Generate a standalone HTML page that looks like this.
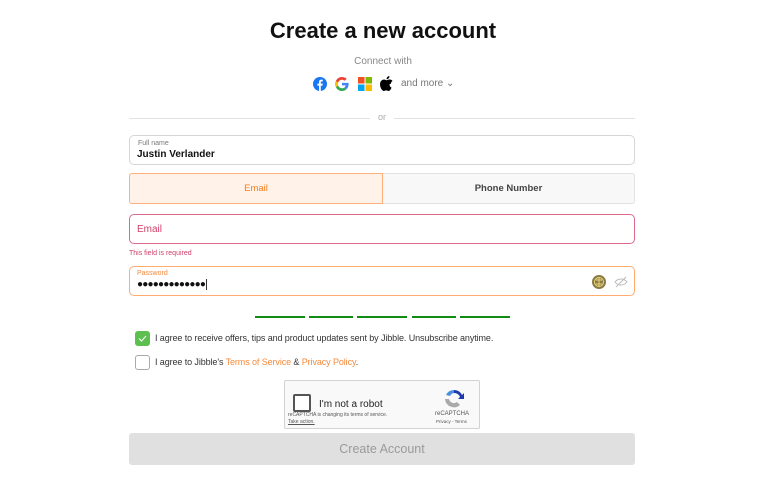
<!DOCTYPE html>
<html><head><style>
*{box-sizing:border-box;margin:0;padding:0}
body{width:758px;height:488px;background:#fff;font-family:"Liberation Sans",sans-serif;position:relative;overflow:hidden;color:#222}
.a{position:absolute}
.box{position:absolute;left:129px;width:506px;height:30px;border-radius:5px;background:#fff}
</style></head><body>
<div class="a" style="left:4px;width:758px;top:18px;text-align:center;font-size:22px;font-weight:bold;color:#111">Create a new account</div>
<div class="a" style="left:4px;width:758px;top:56px;text-align:center;font-size:10px;color:#888">Connect with</div>
<svg class="a" style="left:313px;top:77px" width="14" height="14" viewBox="0 0 14 14"><circle cx="7" cy="7" r="7" fill="#1877f2"/><path d="M7.8 14V8.6h1.7l.3-2H7.8V5.4c0-.6.2-1 1-1h1V2.7c-.3 0-.8-.1-1.4-.1-1.5 0-2.4.9-2.4 2.5v1.5H4.4v2h1.6V14z" fill="#fff"/></svg>
<svg class="a" style="left:335px;top:77px" width="14" height="14" viewBox="0 0 14 14"><path d="M13.6 7.2c0-.5 0-.9-.1-1.3H7v2.5h3.7c-.2.9-.7 1.6-1.4 2.1l2.2 1.7c1.3-1.2 2.1-3 2.1-5z" fill="#4285f4"/><path d="M7 14c1.9 0 3.4-.6 4.5-1.7L9.3 10.6c-.6.4-1.4.7-2.3.7-1.8 0-3.300-1.200-3.900-2.900L.9 10.100C2 12.400 4.300 14 7 14z" fill="#34a853"/><path d="M3.1 8.4C2.9 7.9 2.8 7.5 2.8 7s.1-.9.3-1.4L.9 3.9C.3 4.8 0 5.9 0 7s.3 2.2.9 3.1z" fill="#fbbc05"/><path d="M7 2.8c1 0 1.9.4 2.7 1l2-2C10.4.7 8.8 0 7 0 4.3 0 2 1.6.9 3.9l2.2 1.7C3.7 4 5.2 2.8 7 2.8z" fill="#ea4335"/></svg>
<svg class="a" style="left:358px;top:77px" width="14" height="14"><rect width="6.5" height="6.5" fill="#f25022"/><rect x="7.5" width="6.5" height="6.5" fill="#7fba00"/><rect y="7.5" width="6.5" height="6.5" fill="#00a4ef"/><rect x="7.5" y="7.5" width="6.5" height="6.5" fill="#ffb900"/></svg>
<svg class="a" style="left:380px;top:76px" width="13" height="15" viewBox="0 0 13 15"><path d="M10.8 8c0-2 1.6-2.9 1.7-3-.9-1.4-2.4-1.5-2.9-1.5-1.2-.1-2.4.7-3 .7s-1.6-.7-2.6-.7C2.600 3.500 0 4.800 0 8.300c0 1.100.2 2.200.6 3.200.5 1.400 1.900 3.500 3.200 3.500.8 0 1.300-.6 2.400-.6s1.500.6 2.400.6c1.400 0 2.500-2.200 2.900-3.400-2-.9-1.900-2.800-1.900-3.600zM8.700 2.300C9.400 1.500 9.400.7 9.400 0c-.8.100-1.600.5-2.100 1.100-.5.600-.8 1.300-.7 2.100.8.100 1.500-.3 2.100-.9z" fill="#000"/></svg>
<div class="a" style="left:401px;top:78px;font-size:10px;color:#777">and more ⌄</div>
<div class="a" style="left:129px;top:118px;width:241px;border-top:1px solid #e2e2e2"></div>
<div class="a" style="left:394px;top:118px;width:241px;border-top:1px solid #e2e2e2"></div>
<div class="a" style="left:378px;top:112px;font-size:9px;color:#aaa">or</div>
<div class="box" style="top:135px;border:1px solid #d6d6d6"><div class="a" style="left:8px;top:4px;font-size:7px;color:#777">Full name</div><div class="a" style="left:7px;top:13px;font-size:10px;font-weight:bold;color:#111">Justin Verlander</div></div>
<div class="a" style="left:129px;top:173px;width:254px;height:31px;background:#fff2e8;border:1px solid #ffb07a;border-radius:3px 0 0 3px;text-align:center;line-height:29px;font-size:9.5px;color:#f57c1f">Email</div>
<div class="a" style="left:383px;top:173px;width:252px;height:31px;background:#f8f8f8;border:1px solid #e2e2e2;border-left:none;border-radius:0 3px 3px 0;text-align:center;line-height:29px;font-size:9.5px;font-weight:bold;color:#444">Phone Number</div>
<div class="box" style="top:214px;border:1.5px solid #dc6a8a"><div class="a" style="left:7px;top:9px;font-size:10px;color:#d0406a">Email</div></div>
<div class="a" style="left:129px;top:250px;font-size:7px;color:#d0406a">This field is required</div>
<div class="box" style="top:266px;border:1.5px solid #ffac6e"><div class="a" style="left:7px;top:3px;font-size:7px;color:#f5893a">Password</div><div class="a" style="left:7px;top:12px;font-size:10px;color:#111;letter-spacing:-0.8px">●●●●●●●●●●●●●<span style="border-left:1px solid #333;margin-left:1px"></span></div>
<svg class="a" style="left:462px;top:8px" width="14" height="14"><circle cx="7" cy="7" r="7" fill="#8a7a48"/><circle cx="7" cy="7" r="4.5" fill="none" stroke="#e8d878" stroke-width="1"/><path d="M7 2.5v9M4 5h6M4 9h6" stroke="#e8d878" stroke-width="1"/></svg>
<svg class="a" style="left:484px;top:9px" width="14" height="12"><path d="M1 6c3-4 9-4 12 0-3 4-9 4-12 0z" fill="none" stroke="#bbb" stroke-width="1"/><path d="M2 11L12 1" stroke="#bbb" stroke-width="1"/></svg></div>
<div class="a" style="left:255px;top:316px;width:50px;height:2px;background:#138a13"></div>
<div class="a" style="left:309px;top:316px;width:44px;height:2px;background:#138a13"></div>
<div class="a" style="left:357px;top:316px;width:50px;height:2px;background:#138a13"></div>
<div class="a" style="left:412px;top:316px;width:44px;height:2px;background:#138a13"></div>
<div class="a" style="left:460px;top:316px;width:50px;height:2px;background:#138a13"></div>
<div class="a" style="left:135px;top:331px;width:15px;height:15px;background:#5cbf50;border-radius:3px"><svg width="15" height="15"><path d="M4 7.5l2.5 2.5L11 5" fill="none" stroke="#fff" stroke-width="1"/></svg></div>
<div class="a" style="left:155px;top:333px;font-size:9px;color:#333;letter-spacing:-0.1px">I agree to receive offers, tips and product updates sent by Jibble. Unsubscribe anytime.</div>
<div class="a" style="left:135px;top:355px;width:15px;height:15px;border:1px solid #aaa;border-radius:3px"></div>
<div class="a" style="left:155px;top:357px;font-size:9px;color:#333;letter-spacing:-0.1px">I agree to Jibble's <span style="color:#f5893a">Terms of Service</span> &amp; <span style="color:#f5893a">Privacy Policy</span>.</div>
<div class="a" style="left:284px;top:380px;width:196px;height:49px;background:#f9f9f9;border:1px solid #d3d3d3;border-radius:2px">
<div class="a" style="left:8px;top:13px;width:18px;height:18px;border:2px solid #555;border-radius:2px;background:#fff"></div>
<div class="a" style="left:34px;top:18px;font-size:10px;color:#222">I'm not a robot</div>
<div class="a" style="left:3px;top:31px;font-size:5px;color:#555">reCAPTCHA is changing its terms of service.</div>
<div class="a" style="left:3px;top:38px;font-size:5px;color:#555;text-decoration:underline">Take action.</div>
<svg class="a" style="left:158px;top:7px" width="22" height="22" viewBox="0 0 22 22"><path d="M11 2a9 9 0 0 1 8 5l2-2v6h-6l2-2a6 6 0 0 0-6-4z" fill="#1c3aa9"/><path d="M11 2a9 9 0 0 0-8 5l4 1a5 5 0 0 1 4-3z" fill="#4a90e2"/><path d="M2 11a9 9 0 0 0 15 6l-3-3a5 5 0 0 1-8-3z" fill="#aaa"/></svg>
<div class="a" style="left:150px;top:30px;font-size:6px;color:#555">reCAPTCHA</div>
<div class="a" style="left:151px;top:38px;font-size:4.5px;color:#555">Privacy - Terms</div></div>
<div class="a" style="left:129px;top:433px;width:506px;height:32px;background:#e0e0e0;border-radius:3px;text-align:center;line-height:32px;font-size:12.5px;color:#9a9a9a">Create Account</div>
</body></html>
